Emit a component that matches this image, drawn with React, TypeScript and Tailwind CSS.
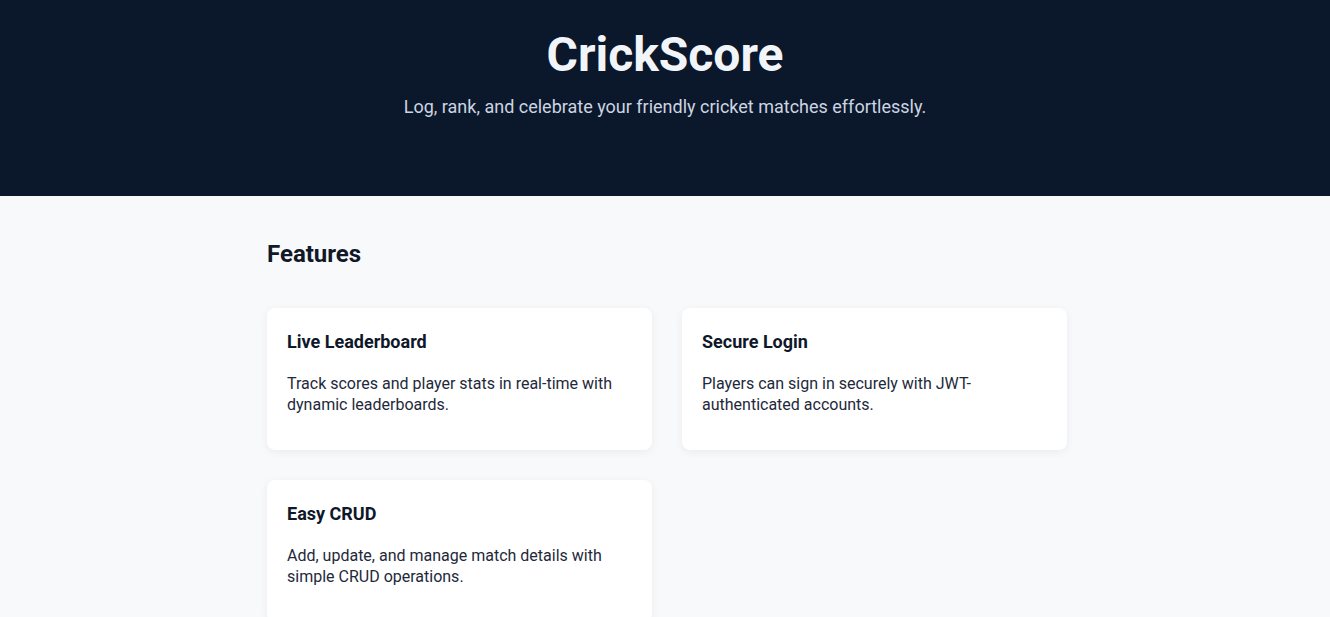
import React from "react";

const features = [
  { title: "Live Leaderboard", desc: "Track scores and player stats in real-time with dynamic leaderboards." },
  { title: "Secure Login", desc: "Players can sign in securely with JWT-authenticated accounts." },
  { title: "Easy CRUD", desc: "Add, update, and manage match details with simple CRUD operations." },
];

export default function App() {
  return (
    <div className="min-h-screen bg-[#f8f9fb]" style={{ fontFamily: "'Segoe UI', Roboto, 'Noto Sans', sans-serif" }}>
      <header className="h-[196px] bg-[#0b172a] pt-[31px] text-center">
        <h1 className="text-[48px] font-bold leading-[48px] text-[#f1f5f9]">CrickScore</h1>
        <p className="mt-[14px] text-[18px] leading-[28px] text-[#cbd5e1]">
          Log, rank, and celebrate your friendly cricket matches effortlessly.
        </p>
      </header>
      <main className="mx-auto w-[804px] pl-[4px] pt-[42px]">
        <h2 className="text-[24px] font-bold leading-[32px] text-[#111827]">Features</h2>
        <div className="mt-[38px] grid grid-cols-2 gap-[30px]">
          {features.map((f) => (
            <div key={f.title} className="h-[142px] rounded-lg bg-white px-5 pt-5 shadow-[0_2px_8px_rgba(0,0,0,0.06)]">
              <h3 className="text-[18px] font-bold leading-[28px] text-[#0f172a]">{f.title}</h3>
              <p className="mt-[17px] text-[16px] leading-[21px] text-[#1e293b]">{f.desc}</p>
            </div>
          ))}
        </div>
      </main>
    </div>
  );
}
